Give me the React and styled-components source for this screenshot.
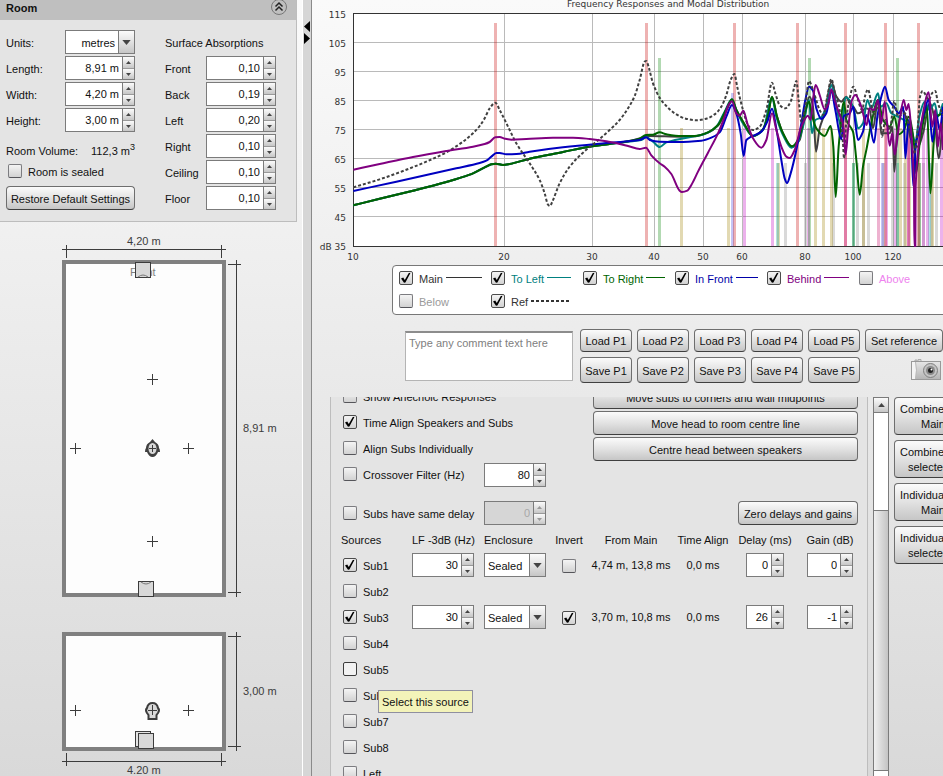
import React, { useId } from "react"
import styled, { createGlobalStyle, css } from "styled-components"

const GlobalStyle = createGlobalStyle`
  * {
    box-sizing: border-box;
  }
  body {
    margin: 0;
    font-family: "Liberation Sans", Arial, sans-serif;
    font-size: 11px;
    line-height: 14px;
    color: #111;
  }
  button, input, select, textarea {
    font: inherit;
    color: inherit;
  }
`

const raised = css`
  background: linear-gradient(#fbfbfb, #e2e2e2 50%, #c6c6c6);
`

const Page = styled.div`
  display: flex;
  height: 100vh;
  overflow: hidden;
  background: linear-gradient(#fafafa, #ebebeb 45%, #d9d9d9);
`
const Sidebar = styled.aside`
  flex: 0 0 303px;
  display: flex;
  flex-direction: column;
  border-right: 1px solid #fff;
`
const RoomPanel = styled.section`
  margin-right: 5px;
  background: #e4e4e4;
  border: solid #bdbdbd;
  border-width: 0 1px 1px 0;
`
const RoomHeader = styled.header`
  display: flex;
  justify-content: space-between;
  align-items: flex-start;
  height: 20px;
  padding: 0 9px 0 6px;
  background: #bfbfbf;
`
const RoomTitle = styled.h2`
  margin: 1px 0 0;
  font-size: 11px;
  font-weight: bold;
`
const CollapseButton = styled.button`
  display: flex;
  width: 16px;
  height: 16px;
  margin-top: -1px;
  padding: 0;
  border: 0;
  background: none;
`
const RoomBody = styled.div`
  display: flex;
  gap: 30px;
  padding: 10px 20px 11px 6px;
`
const FieldColumn = styled.div`
  display: grid;
  grid-template-columns: ${props => props.$label}px 70px;
  grid-auto-rows: 24px;
  row-gap: 2px;
  align-items: center;
`
const FieldLabel = styled.label`
  padding-top: 2px;
`
const Wide = styled.div`
  grid-column: 1 / -1;
  padding: ${props => (props.$text ? "2px 0 0" : props.$inset ? "0 0 0 2px" : 0)};
`
const Volume = styled.div`
  grid-column: 1 / -1;
  align-self: end;
  display: flex;
  justify-content: space-between;
  sup {
    font-size: 9px;
    line-height: 0;
  }
`
const SpinBox = styled.div`
  display: flex;
  width: ${props => props.$width}px;
  height: 24px;
  border: 1px solid #7b7b7b;
  background: ${props => (props.$disabled ? "#d6d6d6" : "#fff")};
  color: ${props => (props.$disabled ? "#a8a8a8" : "#111")};
`
const SpinInput = styled.input`
  flex: 1;
  min-width: 0;
  width: 0;
  padding: 0 3px 0 0;
  border: 0;
  background: none;
  text-align: right;
`
const SpinArrows = styled.div`
  display: grid;
  grid-template-rows: 1fr 1fr;
  width: 12px;
  border-left: 1px solid #7b7b7b;
`
const SpinArrow = styled.button`
  ${raised}
  display: flex;
  align-items: center;
  justify-content: center;
  padding: 0;
  border: 0;
  & + & {
    border-top: 1px solid #999;
  }
`
const SelectBox = styled.div`
  position: relative;
  width: ${props => props.$width}px;
  height: 24px;
`
const SelectInput = styled.select`
  appearance: none;
  width: 100%;
  height: 24px;
  padding: 2px 19px 0 3px;
  border: 1px solid #7b7b7b;
  border-radius: 0;
  background: #fff;
  text-align-last: ${props => props.$align};
`
const SelectArrow = styled.span`
  ${raised}
  position: absolute;
  top: 1px;
  right: 1px;
  bottom: 1px;
  width: 16px;
  display: flex;
  align-items: center;
  justify-content: center;
  border-left: 1px solid #7b7b7b;
  pointer-events: none;
`
const CheckLabel = styled.label`
  display: inline-flex;
  align-items: center;
  gap: 6px;
  color: ${props => props.$color || "#111"};
`
const CheckText = styled.span`
  padding-top: 2px;
`
const CheckBox = styled.span`
  position: relative;
  display: flex;
  width: 14px;
  height: 14px;
  svg {
    position: absolute;
    inset: 0;
    display: none;
    pointer-events: none;
  }
  input:checked + svg {
    display: block;
  }
`
const CheckInput = styled.input`
  appearance: none;
  width: 14px;
  height: 14px;
  margin: 0;
  border: 1px solid #7c7c80;
  border-bottom-color: #55555a;
  border-radius: 2px;
  background: linear-gradient(#f4f4f4, #d2d2d2);
  &:checked {
    border-color: #4c4c4c;
  }
  ${props =>
    props.$hot &&
    css`
      border-color: #3c3c3c;
      background: #f2f2f2;
    `}
`
const Button = styled.button`
  ${raised}
  width: ${props => (props.$width ? `${props.$width}px` : "100%")};
  height: ${props => props.$height || 24}px;
  padding: ${props => (props.$height === 23 ? 0 : "2px 0 0")};
  border: 1px solid #6e6e6e;
  border-bottom-color: #3f3f3f;
  border-radius: 4px;
  white-space: nowrap;
`
const Divider = styled.div`
  flex: 0 0 9px;
  padding-top: 21px;
  background: #d6d6d6;
  border-right: 1px solid #8a8a8a;
  svg {
    display: block;
  }
`
const Main = styled.main`
  flex: 1;
  min-width: 0;
  display: flex;
  flex-direction: column;
  overflow: hidden;
`
const ChartArea = styled.svg`
  display: block;
  flex: none;
  width: 100%;
  height: 265px;
  font-family: "DejaVu Sans", sans-serif;
  font-size: 9px;
  fill: #333;
`
const Legend = styled.div`
  flex: none;
  align-self: flex-start;
  display: grid;
  grid-template-columns: repeat(6, 92px);
  grid-auto-rows: 23px;
  align-items: center;
  margin-left: 80px;
  padding: 0 6px 2px;
  border: 1px solid #777;
  border-radius: 4px;
  background: #fff;
`
const LegendItem = styled.div`
  display: flex;
  align-items: center;
  gap: 3px;
  color: ${props => props.$color};
`
const LegendLine = styled.span`
  width: ${props => props.$width}px;
  height: ${props => (props.$dashed ? 2 : 1)}px;
  background: ${props =>
    props.$dashed
      ? "repeating-linear-gradient(90deg, currentColor 0 3px, transparent 3px 5px)"
      : "currentColor"};
`
const Presets = styled.div`
  flex: none;
  display: flex;
  gap: 7px;
  padding: 14px 0 14px 93px;
`
const Comment = styled.textarea`
  flex: none;
  width: 168px;
  height: 50px;
  margin-top: 2px;
  padding: 3px;
  border: 1px solid #b4b4b4;
  border-top: 2px solid #8c8c8c;
  background: #fff;
  resize: none;
  &::placeholder {
    color: #808080;
    opacity: 1;
  }
`
const PresetGrid = styled.div`
  display: grid;
  grid-template-columns: repeat(5, 52px) 78px;
  grid-template-rows: 23px 26px;
  gap: 5px;
`
const CameraButton = styled.button`
  justify-self: end;
  align-self: start;
  margin: 2px 2px 0 0;
  padding: 0;
  border: 0;
  background: none;
  svg {
    display: block;
  }
`
const Lower = styled.div`
  flex: 1;
  min-height: 0;
  display: flex;
  gap: 5px;
  padding-left: 18px;
`
const SourcePanel = styled.section`
  flex: none;
  overflow: hidden;
  padding: 0 4px 0 10px;
  border: solid #bdbdbd;
  border-width: 0 1px;
  background: #e4e4e4;
`
const Scrolled = styled.div`
  margin-top: -12px;
`
const Options = styled.div`
  display: grid;
  grid-template-columns: 141px 109px 265px;
  grid-auto-rows: 24px;
  row-gap: 2px;
  align-items: center;
  padding-left: 2px;
`
const OptionLabel = styled.div`
  grid-column: 1 / ${props => (props.$wide ? 3 : 2)};
`
const DelayOptions = styled(Options)`
  margin-top: 14px;
  justify-items: start;
  & > :last-child {
    justify-self: end;
  }
`
const SourceTable = styled.table`
  width: 522px;
  margin-top: 2px;
  table-layout: fixed;
  border-collapse: collapse;
  white-space: nowrap;
  th,
  td {
    height: 26px;
    padding: 0;
    font-weight: normal;
    text-align: center;
  }
  th {
    height: 25px;
  }
  th:nth-child(-n + 3),
  td:nth-child(-n + 3) {
    text-align: left;
  }
  td:first-child {
    position: relative;
    padding-left: 2px;
  }
  td > * {
    vertical-align: middle;
  }
  td:nth-child(n + 4) > * {
    margin: 0 auto;
  }
`
const Tooltip = styled.div`
  position: absolute;
  z-index: 1;
  top: 34px;
  left: 37px;
  padding: 4px 3px 3px;
  border: 1px solid #8f8fa0;
  background: #f3f3b9;
`
const ScrollTrack = styled.div`
  flex: 0 0 16px;
  display: flex;
  flex-direction: column;
  border: solid #7b7b7b;
  border-width: 1px 1px 0;
  background: #fff;
`
const ScrollButton = styled.button`
  ${raised}
  display: flex;
  align-items: center;
  justify-content: center;
  height: 15px;
  padding: 0;
  border: 0;
  border-bottom: 1px solid #7b7b7b;
`
const ScrollThumb = styled.div`
  flex: 0 0 261px;
  margin-top: 97px;
  border: solid #7b7b7b;
  border-width: 1px 0;
  background: linear-gradient(90deg, #f0f0f0, #c4c4c4);
`
const SideButtons = styled.div`
  flex: none;
  display: flex;
  flex-direction: column;
  gap: 5px;
`
const SideButton = styled(Button)`
  padding: 2px 5px 0;
  line-height: 15px;
  text-align: left;
  span {
    display: block;
  }
`
const SecondLine = styled.span`
  padding-left: ${props => props.$indent}px;
`

const Triangle = ({ up, size = 5, color = "#444" }) => (
  <svg width={size} height={Math.ceil(size / 2)} viewBox="0 0 10 6">
    <path d={up ? "M0 6h10L5 0z" : "M0 0h10L5 6z"} fill={color} />
  </svg>
)

const Spinner = ({ id, label, value, width = 70, disabled }) => (
  <SpinBox $width={width} $disabled={disabled}>
    <SpinInput
      id={id}
      aria-label={label}
      defaultValue={value}
      disabled={disabled}
    />
    <SpinArrows>
      <SpinArrow aria-label="Increase" disabled={disabled}>
        <Triangle up color={disabled ? "#999" : "#444"} />
      </SpinArrow>
      <SpinArrow aria-label="Decrease" disabled={disabled}>
        <Triangle color={disabled ? "#999" : "#444"} />
      </SpinArrow>
    </SpinArrows>
  </SpinBox>
)

const Dropdown = ({ id, label, options, width = 62, align = "left" }) => (
  <SelectBox $width={width}>
    <SelectInput id={id} aria-label={label} $align={align}>
      {options.map(option => (
        <option key={option}>{option}</option>
      ))}
    </SelectInput>
    <SelectArrow>
      <Triangle size={9} />
    </SelectArrow>
  </SelectBox>
)

const Check = ({ checked, hot, label, children, color }) => (
  <CheckLabel $color={color}>
    <CheckBox>
      <CheckInput
        type="checkbox"
        defaultChecked={checked}
        aria-label={label}
        $hot={hot}
      />
      <svg width="14" height="14" viewBox="0 0 14 14">
        <path
          d="M2 7.4 4.2 6.6 5.8 9 9.8 2 11.6 1.8 6.4 11.6 5 11.8z"
          fill="#000"
        />
      </svg>
    </CheckBox>
    {children && <CheckText>{children}</CheckText>}
  </CheckLabel>
)

const Field = ({ label, value }) => {
  const id = useId()
  return (
    <>
      <FieldLabel htmlFor={id}>{label}</FieldLabel>
      <Spinner id={id} value={value} />
    </>
  )
}

const absorptions = [
  ["Front", "0,10"],
  ["Back", "0,19"],
  ["Left", "0,20"],
  ["Right", "0,10"],
  ["Ceiling", "0,10"],
  ["Floor", "0,10"],
]

const Room = () => (
  <RoomPanel>
    <RoomHeader>
      <RoomTitle>Room</RoomTitle>
      <CollapseButton aria-label="Collapse room settings">
        <svg width="16" height="16" fill="none" stroke="#222">
          <circle cx="8" cy="8" r="7.5" stroke="#777" />
          <path d="M4.5 7.5 8 4 11.5 7.5M4.5 11.5 8 8 11.5 11.5" strokeWidth="1.5" />
        </svg>
      </CollapseButton>
    </RoomHeader>
    <RoomBody>
      <FieldColumn $label={59}>
        <FieldLabel htmlFor="units">Units:</FieldLabel>
        <Dropdown
          id="units"
          options={["metres", "feet"]}
          width={70}
          align="right"
        />
        <Field label="Length:" value="8,91 m" />
        <Field label="Width:" value="4,20 m" />
        <Field label="Height:" value="3,00 m" />
        <Volume>
          <span>Room Volume:</span>
          <span>
            112,3 m<sup>3</sup>
          </span>
        </Volume>
        <Wide $inset>
          <Check>Room is sealed</Check>
        </Wide>
        <Wide>
          <Button>Restore Default Settings</Button>
        </Wide>
      </FieldColumn>
      <FieldColumn $label={41}>
        <Wide $text>Surface Absorptions</Wide>
        {absorptions.map(([label, value]) => (
          <Field key={label} label={label} value={value} />
        ))}
      </FieldColumn>
    </RoomBody>
  </RoomPanel>
)

const Cross = ({ x, y }) => (
  <path d={`M${x - 5} ${y + 0.5}h11M${x + 0.5} ${y - 5}v11`} />
)

const PlanSvg = styled.svg`
  display: block;
  flex: none;
  fill: none;
  stroke: #3c3c3c;
  text {
    fill: #3c3c3c;
    stroke: none;
  }
  text.wall {
    fill: #808080;
  }
`

// plan view above, elevation below
const RoomPlan = () => (
  <PlanSvg width="302" height="556">
    <path d="M62 27.5h164M66.5 23v13M221.5 23v13" />
    <text x="127" y="23">
      4,20 m
    </text>
    <rect x="64" y="40" width="160" height="333" fill="#fdfdfd" stroke="#808080" strokeWidth="4" />
    <text className="wall" x="130" y="54">
      Front
    </text>
    <rect x="135.5" y="40.5" width="15" height="15" fill="#d8d8d8" />
    <path d="M138 55q5-4 10 0" stroke="#777" />
    <path d="M236.5 38v337M228 42.5h13M228 370.5h13" />
    <text x="243" y="210">
      8,91 m
    </text>
    <Cross x={152} y={157} />
    <Cross x={75} y={226} />
    <Cross x={188} y={226} />
    <Cross x={152} y={319} />
    <path d="M152.5 217l2.5 3q4 2 4 6 1 1 1 4h-2q-2 5-5.5 5t-5.5-5h-2q0-3 1-4 0-4 4-6z" fill="#404040" stroke="none" />
    <ellipse cx="152.5" cy="226.5" rx="4" ry="5.5" fill="#d8d8d8" stroke="none" />
    <path d="M149 226.5h7M152.5 223v7" />
    <rect x="138.5" y="359.5" width="15" height="15" fill="#d8d8d8" />
    <path d="M141 360q5 4 10 0" stroke="#777" />
    <rect x="64" y="412" width="160" height="115" fill="#fdfdfd" stroke="#808080" strokeWidth="4" />
    <path d="M236.5 410v119M228 414.5h13M228 524.5h13" />
    <text x="243" y="473">
      3,00 m
    </text>
    <Cross x={75} y={488} />
    <Cross x={188} y={488} />
    <path d="M147 486q1-5 5.5-5t5.5 5q2 2 0 5l-1.5 2v4h-8v-4l-1.5-2q-2-3 0-5z" fill="#d8d8d8" strokeWidth="2" />
    <path d="M148 488.5h9M152.5 483v10" />
    <rect x="135.5" y="509.5" width="15" height="15" fill="#e4e4e4" />
    <rect x="138.5" y="511.5" width="15" height="15" fill="#d8d8d8" />
    <path d="M62 539.5h164M66.5 531v13M221.5 531v13" />
    <text x="127" y="552">
      4.20 m
    </text>
  </PlanSvg>
)

// Curve samples, three units to a pixel; "low" covers 10-38 Hz, "high" the rest
const low = {
  main: [[121,616],[200,596],[300,572],[400,546],[470,524],[515,502],[535,493],[548,491],[570,495],[590,492],[650,476],[750,456],[830,440],[890,432]],
  inFront: [[121,573],[250,545],[350,523],[430,505],[500,489],[520,482],[535,470],[550,459],[560,459],[580,463],[610,462],[650,455],[750,442],[850,432]],
  behind: [[121,509],[200,492],[300,471],[400,453],[480,440],[515,432],[530,426],[547,412],[560,411],[575,416],[595,419],[640,417],[720,413],[780,413],[830,417],[880,424]],
  ref: [[121,562],[200,538],[270,513],[340,485],[400,457],[450,425],[480,400],[500,378],[515,355],[530,325],[547,308],[560,330],[590,390],[610,430],[650,490],[680,540],[695,580],[705,614],[711,618],[718,605],[740,550],[770,500],[810,458],[850,425],[890,390],[920,360]],
}
const high = {
  main: [[0,424],[40,414],[60,408],[160,410],[200,409],[240,398],[270,377],[295,331],[312,302],[325,330],[345,365],[375,408],[405,388],[420,345],[432,292],[447,350],[465,400],[492,441],[515,420],[525,375],[545,290],[555,320],[564,455],[575,385],[590,340],[610,245],[625,290],[640,305],[655,290],[665,310],[676,320],[690,340],[702,335],[712,325],[725,330],[735,385],[750,300],[760,400],[785,400],[793,380],[799,515],[807,400],[825,330],[840,380],[850,420],[870,440],[885,400],[905,310],[920,360],[932,475],[945,350]],
  toLeft: [[0,425],[40,420],[55,412],[75,425],[95,441],[115,427],[160,416],[200,409],[230,402],[265,380],[290,335],[312,298],[325,330],[345,370],[375,408],[405,390],[432,293],[445,350],[465,405],[490,443],[510,425],[525,380],[543,300],[552,400],[562,360],[580,352],[595,320],[610,255],[620,290],[640,380],[653,292],[668,305],[680,340],[690,385],[705,370],[718,300],[730,325],[750,280],[758,320],[775,310],[790,340],[810,350],[828,360],[845,370],[862,425],[875,345],[890,305],[905,330],[920,310],[930,350],[945,310]],
  toRight: [[0,424],[35,416],[54,405],[75,404],[95,397],[115,403],[160,408],[200,408],[240,397],[270,375],[295,328],[312,298],[325,330],[345,365],[375,408],[405,388],[420,345],[432,290],[447,350],[465,400],[492,439],[515,410],[530,340],[543,305],[553,350],[565,385],[590,408],[608,378],[616,440],[623,591],[632,440],[648,305],[655,360],[675,395],[685,480],[695,584],[705,500],[716,445],[730,370],[750,300],[765,360],[785,380],[799,350],[812,403],[828,390],[842,350],[862,470],[864,520],[875,430],[885,370],[897,320],[907,580],[917,430],[925,350],[945,340]],
  inFront: [[0,424],[35,420],[55,412],[65,420],[95,425],[150,426],[220,422],[250,413],[275,397],[295,350],[312,315],[325,340],[338,400],[347,468],[355,420],[370,410],[400,395],[418,365],[432,326],[445,385],[460,480],[470,535],[477,549],[488,520],[505,450],[520,370],[532,300],[543,260],[555,272],[565,325],[580,357],[595,340],[610,275],[622,330],[640,418],[648,348],[665,340],[676,320],[682,370],[690,420],[705,395],[715,345],[725,370],[738,428],[748,350],[760,290],[771,260],[782,300],[800,322],[812,340],[826,320],[832,475],[842,360],[850,420],[856,558],[864,430],[872,400],[888,340],[902,298],[913,425],[925,345],[935,390],[945,320]],
  behind: [[0,438],[35,447],[54,443],[70,466],[95,490],[110,500],[130,522],[155,572],[162,576],[178,572],[190,555],[210,515],[240,458],[270,400],[290,350],[300,318],[312,304],[325,340],[335,347],[346,332],[358,370],[375,415],[400,443],[415,420],[432,340],[445,390],[460,440],[475,470],[485,474],[500,450],[520,380],[540,347],[548,360],[556,290],[563,255],[575,285],[590,328],[600,315],[610,268],[620,300],[635,345],[645,370],[653,463],[660,390],[672,300],[682,285],[700,320],[716,375],[724,325],[738,330],[750,300],[760,370],[770,305],[785,437],[793,400],[800,463],[815,360],[827,300],[835,330],[842,312],[850,400],[858,560],[859,738],[862,738],[863,560],[868,480],[885,340],[902,277],[913,380],[922,330],[930,440],[938,370],[945,450]],
  ref: [[0,325],[20,288],[35,240],[50,185],[55,183],[63,205],[75,250],[95,293],[115,318],[140,340],[170,355],[205,361],[235,356],[260,343],[280,320],[295,285],[308,240],[319,222],[328,262],[345,330],[360,375],[375,390],[395,380],[415,330],[432,248],[442,280],[455,315],[472,325],[488,305],[498,265],[505,243],[512,300],[520,365],[530,330],[543,243],[555,270],[575,330],[585,345],[598,290],[610,237],[620,275],[635,330],[645,430],[648,475],[655,360],[664,300],[676,260],[690,300],[702,330],[712,285],[720,268],[728,300],[736,345],[748,320],[758,370],[762,410],[772,360],[785,390],[799,303],[810,350],[830,340],[842,370],[858,462],[868,400],[876,290],[884,273],[893,285],[902,300],[912,280],[922,273],[930,310],[945,345]],
}
const curves = [
  { low: low.main, high: high.main, color: "#404040" },
  { low: low.main, high: high.toLeft, color: "#008080" },
  { low: low.main, high: high.toRight, color: "#006400" },
  { low: low.inFront, high: high.inFront, color: "#0000c0" },
  { low: low.ref, high: high.ref, color: "#404040", dashed: true },
  { low: low.behind, high: high.behind, color: "#800080" },
]

// cubic path that never overshoots its samples
const smoothPath = curve => {
  const points = [
    ...curve.low.map(([x, y]) => [(x + 3) / 3, y / 3]),
    ...curve.high.map(([x, y]) => [(x + 948) / 3, y / 3]),
  ]
  const slope = i =>
    (points[i + 1][1] - points[i][1]) / (points[i + 1][0] - points[i][0])
  const tangents = points.map((_, i) => {
    if (i === 0) return slope(0)
    if (i === points.length - 1) return slope(i - 1)
    const a = slope(i - 1)
    const b = slope(i)
    return a * b <= 0 ? 0 : (2 * a * b) / (a + b)
  })
  return points
    .map(([x, y], i) => {
      if (i === 0) return `M${x} ${y}`
      const [px, py] = points[i - 1]
      const d = (x - px) / 3
      return `C${px + d} ${py + d * tangents[i - 1]} ${x - d} ${
        y - d * tangents[i]
      } ${x} ${y}`
    })
    .join("")
}

const modes = [
  { color: "#808080", top: 163, at: [472, 492, 520, 544, 550, 555, 570, 579, 591, 606, 610, 618, 623] },
  { color: "#a08000", top: 128, at: [368, 415, 502, 510, 518, 550, 587, 592, 596, 619] },
  { color: "#a08000", top: 163, at: [465] },
  { color: "#00a0a0", top: 163, at: [464, 540, 584, 616] },
  { color: "#4040e0", top: 93, at: [419] },
  { color: "#4040e0", top: 163, at: [569] },
  { color: "#c000c0", top: 128, at: [431, 459, 495, 532, 573, 582, 595, 610, 614, 628] },
  { color: "#008000", top: 58, at: [346, 496, 584] },
  { color: "#008000", top: 163, at: [540, 606] },
  { color: "#c80000", top: 23, at: [182, 333, 421, 484, 532, 572, 605] },
  { color: "#c80064", top: 128, at: [565, 595] },
]
const levels = [115, 105, 95, 85, 75, 65, 55, 45, 35]
const frequencies = [
  [10, 41],
  [20, 192],
  [30, 280],
  [40, 342],
  [50, 391],
  [60, 430],
  [80, 493],
  [100, 541],
  [120, 581],
]

const Chart = () => (
  <ChartArea>
    <text x="255" y="7">
      Frequency Responses and Modal Distribution
    </text>
    <rect x="41" y="13" width="100%" height="233" fill="#fff" />
    {levels.map((level, i) => {
      const edge = i === 0 || i === 8
      const y = i === 8 ? 246.5 : 13.5 + i * 29
      return (
        <g key={level}>
          <line
            x1="41"
            x2="100%"
            y1={y}
            y2={y}
            stroke={edge ? "#333" : "#bababa"}
          />
          <text x="34" y={18 + i * 29} textAnchor="end">
            {i === 8 ? "dB 35" : level}
          </text>
        </g>
      )
    })}
    {frequencies.map(([label, x], i) => (
      <g key={label}>
        <line
          x1={x + 0.5}
          x2={x + 0.5}
          y1="14"
          y2="246"
          stroke={i ? "#bababa" : "#333"}
        />
        <text x={x} y="260" textAnchor="middle">
          {label}
        </text>
      </g>
    ))}
    {modes.map(({ color, top, at }, i) => (
      <g key={i} fill={color} fillOpacity="0.3">
        {at.map(x => (
          <rect key={x} x={x} y={top} width="3" height={246 - top} />
        ))}
      </g>
    ))}
    {curves.map((curve, i) => (
      <path
        key={i}
        d={smoothPath(curve)}
        fill="none"
        stroke={curve.color}
        strokeWidth="2"
        strokeDasharray={curve.dashed ? "3 2" : undefined}
      />
    ))}
  </ChartArea>
)

const legend = [
  { label: "Main", color: "#333", line: 36, on: true },
  { label: "To Left", color: "#008080", line: 24, on: true },
  { label: "To Right", color: "#006400", line: 19, on: true },
  { label: "In Front", color: "#0000a8", line: 22, on: true },
  { label: "Behind", color: "#800080", line: 25, on: true },
  { label: "Above", color: "#ee82ee" },
  { label: "Below", color: "#9a9a9a" },
  { label: "Ref", color: "#333", line: 38, on: true, dashed: true },
]

const presets = ["P1", "P2", "P3", "P4", "P5"]

const Camera = () => (
  <svg width="30" height="22" viewBox="0 0 30 22">
    <defs>
      <linearGradient id="camera" x2="0" y2="1">
        <stop offset="0" stopColor="#e6e6e6" />
        <stop offset="1" stopColor="#b4b4b4" />
      </linearGradient>
    </defs>
    <path d="M4 2.5V1h2v1.5M7 2.5V.5h3v2" fill="#ddd" stroke="#aaa" />
    <rect x=".5" y="2.5" width="29" height="18" fill="url(#camera)" stroke="#999" />
    <path d="M1 3h3q2 8 0 17H1z" fill="#f4f4f4" />
    <path d="M4.5 3q2 8 0 17" fill="none" stroke="#bbb" />
    <circle cx="19.5" cy="11.5" r="7" fill="#c4c4c4" stroke="#808080" />
    <circle cx="19.5" cy="11.5" r="4.5" fill="#8a8a8a" />
    <circle cx="19.5" cy="11.5" r="2.5" fill="#222" />
    <circle cx="20.5" cy="10.5" r="1" fill="#fff" />
  </svg>
)

const sources = [
  {
    name: "Sub1",
    on: true,
    distance: "4,74 m, 13,8 ms",
    delay: "0",
    gain: "0",
  },
  { name: "Sub2" },
  {
    name: "Sub3",
    on: true,
    inverted: true,
    distance: "3,70 m, 10,8 ms",
    delay: "26",
    gain: "-1",
  },
  { name: "Sub4" },
  { name: "Sub5", hot: true },
  { name: "Sub6" },
  { name: "Sub7" },
  { name: "Sub8" },
  { name: "Left" },
]
const widths = [71, 72, 65, 40, 84, 60, 64, 66]
const headings = [
  "Sources",
  "LF -3dB (Hz)",
  "Enclosure",
  "Invert",
  "From Main",
  "Time Align",
  "Delay (ms)",
  "Gain (dB)",
]

const SourceRow = ({ source }) => (
  <tr>
    <td>
      <Check checked={source.on} hot={source.hot}>
        {source.name}
      </Check>
      {source.hot && <Tooltip role="tooltip">Select this source</Tooltip>}
    </td>
    {source.on && (
      <>
        <td>
          <Spinner label={`${source.name} LF -3dB`} value="30" width={62} />
        </td>
        <td>
          <Dropdown
            label={`${source.name} enclosure`}
            options={["Sealed", "Ported"]}
          />
        </td>
        <td>
          <Check label={`Invert ${source.name}`} checked={source.inverted} />
        </td>
        <td>{source.distance}</td>
        <td>0,0 ms</td>
        <td>
          <Spinner
            label={`${source.name} delay`}
            value={source.delay}
            width={38}
          />
        </td>
        <td>
          <Spinner
            label={`${source.name} gain`}
            value={source.gain}
            width={46}
          />
        </td>
      </>
    )}
  </tr>
)

const Sources = () => (
  <SourcePanel>
    <Scrolled>
      <Options>
        <OptionLabel $wide>
          <Check>Show Anechoic Responses</Check>
        </OptionLabel>
        <Button>Move subs to corners and wall midpoints</Button>
        <OptionLabel $wide>
          <Check checked>Time Align Speakers and Subs</Check>
        </OptionLabel>
        <Button>Move head to room centre line</Button>
        <OptionLabel $wide>
          <Check>Align Subs Individually</Check>
        </OptionLabel>
        <Button>Centre head between speakers</Button>
        <OptionLabel>
          <Check>Crossover Filter (Hz)</Check>
        </OptionLabel>
        <Spinner label="Crossover frequency" value="80" width={62} />
      </Options>
      <DelayOptions>
        <Check>Subs have same delay</Check>
        <Spinner label="Common delay" value="0" width={62} disabled />
        <Button $width={120}>Zero delays and gains</Button>
      </DelayOptions>
      <SourceTable>
        <colgroup>
          {widths.map((width, i) => (
            <col key={i} width={width} />
          ))}
        </colgroup>
        <thead>
          <tr>
            {headings.map(heading => (
              <th key={heading}>{heading}</th>
            ))}
          </tr>
        </thead>
        <tbody>
          {sources.map(source => (
            <SourceRow key={source.name} source={source} />
          ))}
        </tbody>
      </SourceTable>
    </Scrolled>
  </SourcePanel>
)

const views = [
  ["Combined", "Main", 21],
  ["Combined", "selected", 8],
  ["Individual", "Main", 21],
  ["Individual", "selected", 8],
]

const App = () => (
  <Page>
    <GlobalStyle />
    <Sidebar>
      <Room />
      <RoomPlan />
    </Sidebar>
    <Divider>
      <svg width="8" height="24">
        <path d="M7 0v11L1 5.5zM1 12v11l6-5.5z" fill="#000" />
      </svg>
    </Divider>
    <Main>
      <Chart />
      <Legend>
        {legend.map(item => (
          <LegendItem key={item.label} $color={item.color}>
            <Check checked={item.on} color={item.color}>
              {item.label}
            </Check>
            {item.line && (
              <LegendLine $width={item.line} $dashed={item.dashed} />
            )}
          </LegendItem>
        ))}
      </Legend>
      <Presets>
        <Comment
          aria-label="Comment"
          placeholder="Type any comment text here"
        />
        <PresetGrid>
          {presets.map(preset => (
            <Button key={preset} $height={23}>
              Load {preset}
            </Button>
          ))}
          <Button $height={23}>Set reference</Button>
          {presets.map(preset => (
            <Button key={preset} $height={26}>
              Save {preset}
            </Button>
          ))}
          <CameraButton aria-label="Capture image">
            <Camera />
          </CameraButton>
        </PresetGrid>
      </Presets>
      <Lower>
        <Sources />
        <ScrollTrack>
          <ScrollButton aria-label="Scroll up">
            <Triangle up size={7} />
          </ScrollButton>
          <ScrollThumb />
        </ScrollTrack>
        <SideButtons>
          {views.map(([first, second, indent]) => (
            <SideButton key={first + second} $width={77} $height={38}>
              <span>{first}</span>
              <SecondLine $indent={indent}>{second}</SecondLine>
            </SideButton>
          ))}
        </SideButtons>
      </Lower>
    </Main>
  </Page>
)

export default App
